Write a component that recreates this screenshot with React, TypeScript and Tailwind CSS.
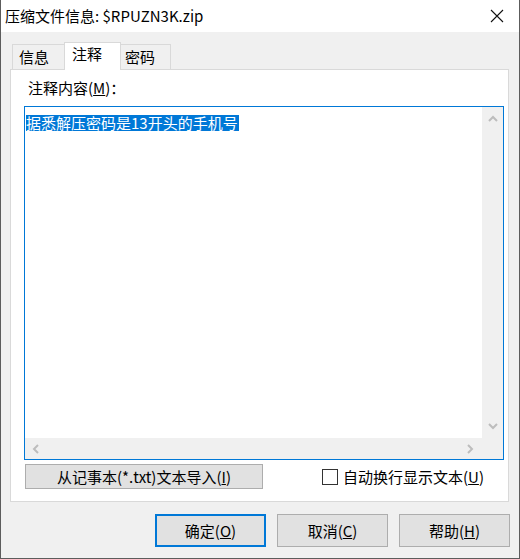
import React from "react";

const F = { fontFamily: '"Noto Sans CJK SC", "Microsoft YaHei", sans-serif' };

function Chevron({ dir }: { dir: "up" | "down" | "left" | "right" }) {
  const paths: Record<string, string> = {
    up: "M1 6 L5 2 L9 6",
    down: "M1 2 L5 6 L9 2",
    left: "M6 1 L2 5 L6 9",
    right: "M2 1 L6 5 L2 9",
  };
  const vertical = dir === "up" || dir === "down";
  return (
    <svg
      width={vertical ? 10 : 8}
      height={vertical ? 8 : 10}
      viewBox={vertical ? "0 0 10 8" : "0 0 8 10"}
      fill="none"
      stroke="#bdbdbd"
      strokeWidth="2"
    >
      <path d={paths[dir]} />
    </svg>
  );
}

export default function App() {
  return (
    <div
      className="w-[520px] h-[559px] flex flex-col border-x border-b border-[#5c5c5c] bg-[#f0f0f0] text-black overflow-hidden"
      style={F}
    >
      {/* Title bar */}
      <div className="h-[32px] bg-white flex items-center justify-between pl-[4px] pr-[15px] shrink-0">
        <span className="text-[15px] leading-[20px] text-black">压缩文件信息: $RPUZN3K.zip</span>
        <svg width="14" height="14" viewBox="0 0 14 14" stroke="#111" strokeWidth="1.1" fill="none">
          <path d="M1 1 L13 13 M13 1 L1 13" />
        </svg>
      </div>

      {/* Body */}
      <div className="flex-1 flex flex-col pl-[9px] pt-[10px]">
        {/* Tabs */}
        <div className="h-[27px] flex items-end pl-[2px] text-[15px]">
          <div className="w-[52px] h-[25px] border border-r-0 border-b-0 border-[#d9d9d9] bg-[#f0f0f0] flex items-center pl-[6px] leading-[18px]">
            信息
          </div>
          <div className="w-[57px] h-[28px] -mb-[1px] relative z-10 border border-b-0 border-[#d9d9d9] bg-white flex items-start pt-[2px] pl-[7px] leading-[18px]">
            注释
          </div>
          <div className="w-[50px] h-[25px] border border-l-0 border-b-0 border-[#d9d9d9] bg-[#f0f0f0] flex items-center pl-[4px] leading-[18px]">
            密码
          </div>
        </div>

        {/* Panel */}
        <div className="w-[499px] h-[433px] border border-[#d9d9d9] bg-white flex flex-col">
          <div className="h-[17px] mt-[9px] ml-[17px] text-[15px] leading-[17px]">
            注释内容(<span className="underline">M</span>)：
          </div>

          {/* Text area */}
          <div className="mt-[10px] ml-[13px] w-[480px] h-[354px] border border-[#0078d7] flex flex-col">
            <div className="flex h-[331px]">
              <div className="w-[457px] h-full bg-white pl-[1px] pt-[3px]">
                <span className="bg-[#0078d7] text-white text-[15px] leading-[16px] inline-block pr-[1px]">
                  据悉解压密码是13开头的手机号
                </span>
              </div>
              <div className="w-[21px] h-full bg-[#f0f0f0] flex flex-col items-center justify-between pt-[8px] pb-[8px]">
                <Chevron dir="up" />
                <Chevron dir="down" />
              </div>
            </div>
            <div className="flex h-[21px]">
              <div className="w-[457px] h-full bg-[#f0f0f0] flex items-center justify-between pl-[7px] pr-[8px]">
                <Chevron dir="left" />
                <Chevron dir="right" />
              </div>
              <div className="w-[21px] h-full bg-[#f0f0f0]" />
            </div>
          </div>

          {/* Import + checkbox row */}
          <div className="mt-[4px] flex items-center h-[25px]">
            <div className="ml-[14px] w-[238px] h-[25px] bg-[#e1e1e1] border border-[#adadad] flex items-center justify-center text-[15px] leading-[18px]">
              从记事本(*.txt)文本导入(<span className="underline">I</span>)
            </div>
            <div className="ml-[59px] flex items-center">
              <div className="w-[16px] h-[16px] border border-[#333333] bg-white" />
              <span className="ml-[5px] text-[15px] leading-[18px]">
                自动换行显示文本(<span className="underline">U</span>)
              </span>
            </div>
          </div>
        </div>

        {/* Bottom buttons */}
        <div className="mt-[12px] flex justify-end gap-[11px] pr-[9px]">
          <div className="w-[111px] h-[33px] bg-[#e1e1e1] border-2 border-[#0078d7] flex items-center justify-center text-[15px] leading-[18px]">
            确定(<span className="underline">O</span>)
          </div>
          <div className="w-[111px] h-[33px] bg-[#e1e1e1] border border-[#adadad] flex items-center justify-center text-[15px] leading-[18px]">
            取消(<span className="underline">C</span>)
          </div>
          <div className="w-[111px] h-[33px] bg-[#e1e1e1] border border-[#adadad] flex items-center justify-center text-[15px] leading-[18px]">
            帮助(<span className="underline">H</span>)
          </div>
        </div>
      </div>
    </div>
  );
}
